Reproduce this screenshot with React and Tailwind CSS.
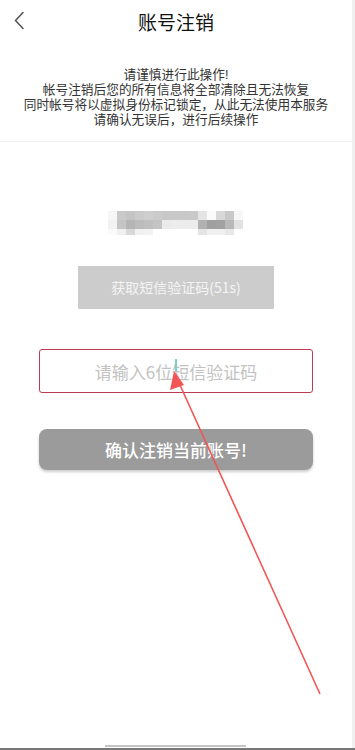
import React from 'react';

const cn = '"Noto Sans CJK SC", "Noto Sans", sans-serif';
const tight = '"Liberation Sans", "Noto Sans CJK SC", sans-serif';

// pixelated (mosaic) phone number, 15 x 3 cells
const mosaic = [
  ['#f6f6f6', '#c9c9c9', '#c4c4c4', '#cbcbcb', '#cecece', '#cbcbcb', '#c8c8c8', '#c8c8c8', '#c8c8c8', '#c9c9c9', '#e4e4e4', '#fafafa', '#d8d8d8', '#c8c8c8', '#f6f6f6'],
  ['#f2f2f2', '#c4c4c4', '#b5b5b5', '#bcbcbc', '#c0c0c0', '#c4c4c4', '#eaeaea', '#ececec', '#ececec', '#ececec', '#b1b1b1', '#a0a0a0', '#a2a2a2', '#b8b8b8', '#e2e2e2'],
  ['#fafafa', '#f0f0f0', '#d8d8d8', '#f0f0f0', '#f2f2f2', '#ffffff', '#ffffff', '#ffffff', '#ffffff', '#ffffff', '#e4e4e4', '#f0f0f0', '#f0f0f0', '#e8e8e8', '#ffffff'],
];

const Mosaic = () => (
  <svg width="135" height="24" viewBox="0 0 135 24">
    {mosaic.map((row, r) =>
      row.map((c, i) => <rect key={`${r}-${i}`} x={i * 9} y={r * 9} width="9" height={r === 2 ? 6 : 9} fill={c} />)
    )}
  </svg>
);

export default function App() {
  return (
    <div className="relative w-[355px] h-[750px] bg-[#f0f0f0] overflow-hidden" style={{ fontFamily: cn }}>
      <div className="w-[352px] h-full bg-white flex flex-col">
        {/* header */}
        <div className="relative h-[42px] flex items-center justify-center">
          <svg className="absolute left-[13px] top-[11px]" width="12" height="19" viewBox="0 0 12 19">
            <path d="M10 1.5 L2.5 9.5 L10 17.5" fill="none" stroke="#555" strokeWidth="1.6" strokeLinecap="round" strokeLinejoin="round" />
          </svg>
          <h1 className="text-[19px] text-[#111] font-normal leading-none">账号注销</h1>
        </div>

        {/* warning */}
        <div className="pt-[26px] pb-[13px] border-b border-[#f0f0f0]">
          <p className="text-center text-[12.7px] leading-[15px] text-[#333]" style={{ fontFamily: tight }}>
            请谨慎进行此操作!
            <br />
            帐号注销后您的所有信息将全部清除且无法恢复
            <br />
            同时帐号将以虚拟身份标记锁定，从此无法使用本服务
            <br />
            请确认无误后，进行后续操作
          </p>
        </div>

        <div className="flex flex-col items-center">
          <div className="mt-[69px] ml-[-2px]">
            <Mosaic />
          </div>

          <button className="mt-[31px] w-[196px] h-[43px] bg-[#cccccc] text-[#f4f4f4] text-[14px] flex items-center justify-center">
            获取短信验证码(51s)
          </button>

          <div className="relative mt-[40px] w-[274px] h-[44px] border-[1.5px] border-[#bd3a55] rounded-[3px] flex items-center justify-center">
            <span className="text-[17px] text-[#c2c2c2] leading-none">请输入6位短信验证码</span>
            <span className="absolute left-[135px] top-[9px] w-[2px] h-[12px] bg-[#7fd0c4]" />
          </div>

          <button className="mt-[36px] w-[274px] h-[41px] rounded-[8px] bg-[#9b9b9b] text-white text-[17px] font-medium shadow-[0_2px_3px_rgba(0,0,0,0.2)] flex items-center justify-center">
            确认注销当前账号!
          </button>
        </div>
      </div>

      {/* red annotation arrow */}
      <svg className="absolute left-0 top-0 pointer-events-none" width="355" height="750" viewBox="0 0 355 750">
        <line x1="320" y1="694" x2="175" y2="374" stroke="#f25555" strokeWidth="1.6" />
        <polygon points="174,371 170,390 184,385" fill="#f25555" />
      </svg>

      {/* bottom bars */}
      <div className="absolute left-[105px] top-[745px] w-[141px] h-[2px] bg-[#c4c4c4]" />
      <div className="absolute left-0 bottom-0 w-full h-[2px] bg-[#777]" />
    </div>
  );
}
